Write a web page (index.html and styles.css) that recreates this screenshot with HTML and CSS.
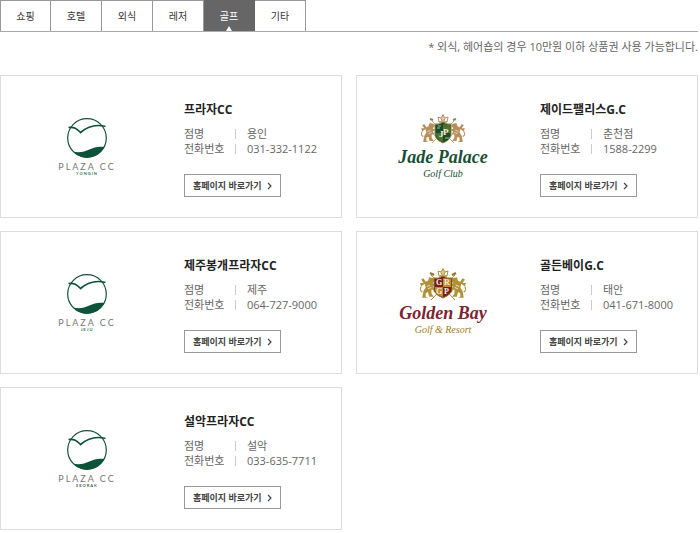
FILE: index.html
```html
<!DOCTYPE html>
<html lang="ko">
<head>
  <meta charset="UTF-8">
  <meta name="viewport" content="width=device-width, initial-scale=1.0">
  <title>골프</title>
  <link rel="stylesheet" href="styles.css">
</head>
<body>
  <!-- Shared drawings -->
  <svg class="symbols" width="0" height="0" aria-hidden="true">
    <symbol id="plaza" viewBox="0 0 60 42">
      <circle cx="30" cy="21" r="19.3" fill="none" stroke="#174f3a" stroke-width="1.2"/>
      <path d="M11.500 10.500C17 9.500 20 12 23.500 15.500C30 10 39 7 48.500 9.500" fill="none" stroke="#0c5439" stroke-width="1.7"/>
      <path d="M16 34.500C29 38 34 28 47.500 30Q41 40.500 30 40.500Q22 40.500 16 34.500Z" fill="#0c5439"/>
    </symbol>
    <symbol id="lion" viewBox="0 0 14 20">
      <path d="M8 1L12 2L13 4L11 6L13 8L11 9L13 12L10 12L10 15L12 18L8 18L7 14L5 15L5 18L7 19L2 19L3 13L5 10L4 7L1 9L0 6L3 6L1 3L3 2L5 5L7 4Z" fill="currentColor"/>
      <path d="M4 7L3 12M6 9L9 8M7 11L10 10" fill="none" stroke="#fff" stroke-width="0.6"/>
      <path d="M2 14L0 12L1 9M9 9L13 7" fill="none" stroke="currentColor" stroke-width="1"/>
    </symbol>
    <symbol id="crown" viewBox="0 0 12 9">
      <path d="M2 8L1 3L4 4L6 1L8 4L11 3L10 8Z" fill="none" stroke="currentColor" stroke-width="1"/>
      <path d="M6 0V7M4 4L5 7M8 4L7 7M2 8H10" stroke="currentColor" stroke-width="1"/>
    </symbol>
    <symbol id="arrow" viewBox="0 0 5 8">
      <path d="M1 1L4 4L1 7" fill="none" stroke="#444" stroke-width="1.2"/>
    </symbol>
  </svg>

  <nav class="tabs">
    <a href="#">쇼핑</a>
    <a href="#">호텔</a>
    <a href="#">외식</a>
    <a href="#">레저</a>
    <a href="#" class="on">골프</a>
    <a href="#">기타</a>
  </nav>

  <p class="notice">* 외식, 헤어숍의 경우 10만원 이하 상품권 사용 가능합니다.</p>

  <main class="store-list">
    <section class="store">
      <div class="logo plaza">
        <svg width="60" height="42"><use href="#plaza"/></svg>
        <span class="brand">PLAZA CC</span>
        <span class="place">YONGIN</span>
      </div>
      <div class="info">
        <h2>프라자CC</h2>
        <dl>
          <dt>점명</dt><dd>용인</dd>
          <dt>전화번호</dt><dd>031-332-1122</dd>
        </dl>
        <a href="#" class="go">홈페이지 바로가기 <svg width="5" height="8"><use href="#arrow"/></svg></a>
      </div>
    </section>

    <section class="store">
      <div class="logo jade">
        <svg width="46" height="34" viewBox="0 0 46 32">
          <path d="M12 29L34 7M34 29L12 7" stroke="#c0a27c" stroke-width="1"/>
          <path d="M10 5L13 6M33 6L36 5" stroke="#8c8057" stroke-width="2"/>
          <g color="#b98e5d">
            <use href="#lion" x="1" y="8" width="15" height="21"/>
            <use href="#lion" width="15" height="21" transform="translate(45 8) scale(-1 1)"/>
            <use href="#crown" x="17" y="0" width="12" height="9"/>
          </g>
          <path d="M15 10Q19 11 23 8Q27 11 31 10V22Q29 27 23 29Q17 27 15 22Z" fill="#154d31" stroke="#8a8540"/>
          <path d="M23 10L30 11V19H23ZM16 19H23V28Q17 26 16 21Z" fill="#52702c"/>
          <path d="M18 12H21M17 14H20M25 24H29" stroke="#c3b765"/>
          <text x="19" y="23" class="crest-letter">J</text>
          <text x="23" y="21" class="crest-letter">P</text>
        </svg>
        <span class="script">Jade Palace</span>
        <span class="sub">Golf Club</span>
      </div>
      <div class="info">
        <h2>제이드팰리스G.C</h2>
        <dl>
          <dt>점명</dt><dd>춘천점</dd>
          <dt>전화번호</dt><dd>1588-2299</dd>
        </dl>
        <a href="#" class="go">홈페이지 바로가기 <svg width="5" height="8"><use href="#arrow"/></svg></a>
      </div>
    </section>

    <section class="store">
      <div class="logo plaza">
        <svg width="60" height="42"><use href="#plaza"/></svg>
        <span class="brand">PLAZA CC</span>
        <span class="place">JEJU</span>
      </div>
      <div class="info">
        <h2>제주봉개프라자CC</h2>
        <dl>
          <dt>점명</dt><dd>제주</dd>
          <dt>전화번호</dt><dd>064-727-9000</dd>
        </dl>
        <a href="#" class="go">홈페이지 바로가기 <svg width="5" height="8"><use href="#arrow"/></svg></a>
      </div>
    </section>

    <section class="store">
      <div class="logo golden">
        <svg width="50" height="36" viewBox="0 0 50 36">
          <path d="M13 33L37 8M37 33L13 8" stroke="#a88b3d" stroke-width="1"/>
          <path d="M12 6L16 8M34 8L38 6" stroke="#8f742b" stroke-width="2"/>
          <g color="#b09236">
            <use href="#lion" x="2" y="9" width="16" height="23"/>
            <use href="#lion" width="16" height="23" transform="translate(48 9) scale(-1 1)"/>
            <use href="#crown" x="19" y="1" width="12" height="9"/>
          </g>
          <path d="M16 11Q21 12 25 9Q29 12 34 11V24Q31 29 25 31Q19 29 16 24Z" fill="#741e24" stroke="#9b7426"/>
          <path d="M25 11L33 12V20H25ZM17 20H25V30Q18 28 17 23Z" fill="#c18a2b"/>
          <text x="18" y="18" class="crest-letter small">G</text>
          <text x="26" y="18" class="crest-letter small">R</text>
          <text x="18" y="27" class="crest-letter small">G</text>
          <text x="26" y="27" class="crest-letter small">P</text>
        </svg>
        <span class="script">Golden Bay</span>
        <span class="sub">Golf &amp; Resort</span>
      </div>
      <div class="info">
        <h2>골든베이G.C</h2>
        <dl>
          <dt>점명</dt><dd>태안</dd>
          <dt>전화번호</dt><dd>041-671-8000</dd>
        </dl>
        <a href="#" class="go">홈페이지 바로가기 <svg width="5" height="8"><use href="#arrow"/></svg></a>
      </div>
    </section>

    <section class="store">
      <div class="logo plaza">
        <svg width="60" height="42"><use href="#plaza"/></svg>
        <span class="brand">PLAZA CC</span>
        <span class="place dark">SEORAK</span>
      </div>
      <div class="info">
        <h2>설악프라자CC</h2>
        <dl>
          <dt>점명</dt><dd>설악</dd>
          <dt>전화번호</dt><dd>033-635-7711</dd>
        </dl>
        <a href="#" class="go">홈페이지 바로가기 <svg width="5" height="8"><use href="#arrow"/></svg></a>
      </div>
    </section>
  </main>
</body>
</html>
```
FILE: styles.css
```css
/* General Styles */
* {
  box-sizing: border-box;
}

body {
  margin: 0;
  padding-right: 2px;
  background-color: #fff;
  color: #666;
  font-family: "Open Sans", "Noto Sans CJK KR", sans-serif;
  font-size: 11px;
  line-height: 15px;
}

a {
  color: inherit;
  text-decoration: none;
}

.symbols {
  position: absolute;
}

/* Tabs */
.tabs {
  display: flex;
  height: 32px;
  padding-left: 1px;
  border-bottom: 1px solid #aaa;
}

.tabs a {
  position: relative;
  width: 51px;
  border: 1px solid #999;
  border-width: 1px 1px 0 0;
  color: #333;
  font-size: 10px;
  line-height: 30px;
  text-align: center;
}

.tabs a:first-child {
  margin-left: -1px;
  border-left-width: 1px;
}

.tabs .on {
  background-color: #666;
  border-color: #666;
  color: #fff;
}

/* White pointer at the bottom of the open tab */
.tabs .on::after {
  content: "";
  position: absolute;
  left: 50%;
  bottom: 0;
  margin-left: -3px;
  border: 3px solid transparent;
  border-top-width: 0;
  border-bottom: 5px solid #fff;
}

.notice {
  margin: 7px 0 21px;
  text-align: right;
}

/* Store cards */
.store-list {
  display: grid;
  grid-template-columns: 1fr 1fr;
  gap: 13px 14px;
}

.store {
  display: flex;
  height: 143px;
  border: 1px solid #ddd;
}

.logo {
  display: flex;
  flex-direction: column;
  align-items: center;
  flex: none;
  width: 172px;
  padding-top: 41px;
  white-space: nowrap;
}

.info {
  padding: 25px 0 0 11px;
}

.info h2 {
  margin: 0 0 8px;
  color: #222;
  font-size: 12px;
  line-height: 17px;
}

.info dl {
  display: grid;
  grid-template-columns: 51px auto;
  margin: 0 0 18px;
}

.info dd {
  display: flex;
  align-items: center;
  margin: 0;
}

.info dd::before {
  content: "";
  width: 1px;
  height: 10px;
  margin-right: 11px;
  background-color: #ccc;
}

.go {
  display: inline-flex;
  align-items: center;
  gap: 5px;
  height: 23px;
  padding: 0 8px;
  border: 1px solid #999;
  color: #444;
  font-size: 9px;
  font-weight: bold;
}

/* Logos */
.brand {
  margin-top: 3px;
  color: #777;
  font-family: Lato, sans-serif;
  font-size: 9px;
  line-height: 9px;
  letter-spacing: 2px;
}

.place {
  color: #26775a;
  font-family: Lato, sans-serif;
  font-size: 4px;
  font-weight: bold;
  line-height: 6px;
  letter-spacing: 1px;
}

.place.dark {
  color: #456054;
}

.jade {
  padding-top: 37px;
  color: #194f36;
}

.golden {
  padding-top: 35px;
  color: #7b2530;
}

.script {
  font-family: "Liberation Serif", serif;
  font-size: 18px;
  font-style: italic;
  font-weight: bold;
  line-height: 21px;
}

.sub {
  font-family: "Liberation Serif", serif;
  font-size: 10px;
  font-style: italic;
  line-height: 12px;
}

.golden .sub {
  color: #a08020;
}

.crest-letter {
  fill: #f4efda;
  font-family: "Liberation Serif", serif;
  font-size: 9px;
  font-weight: bold;
}

.crest-letter.small {
  font-size: 8px;
}
```
